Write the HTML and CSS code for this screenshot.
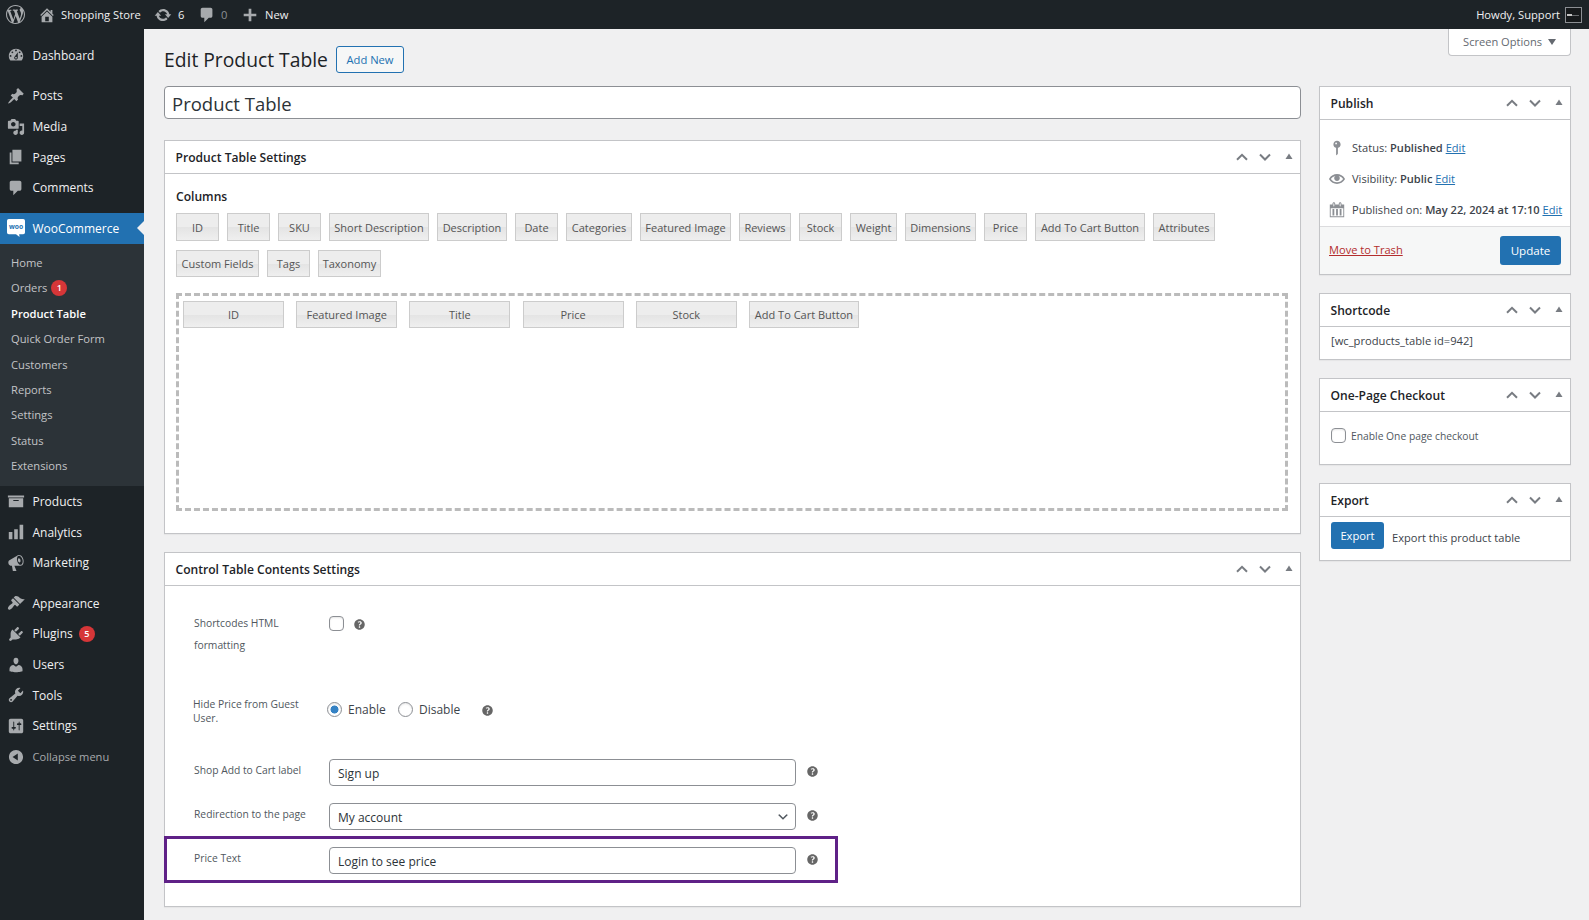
FILE: index.html
```html
<!DOCTYPE html>
<html lang="en">

<head>
	<meta charset="UTF-8">
	<title>Edit Product Table</title>
	<link rel="stylesheet" href="styles.css">
</head>

<body>
	<!-- shared icons -->
	<svg class="sprite" width="0" height="0">
		<symbol id="comment" viewBox="0 0 20 20"><path d="M5 2h9c1.1 0 2 .9 2 2v7c0 1.1-.9 2-2 2h-2l-5 5v-5H5c-1.1 0-2-.9-2-2V4c0-1.1.9-2 2-2z" /></symbol>
		<symbol id="help" viewBox="0 0 20 20"><path d="M17 10c0-3.87-3.14-7-7-7-3.87 0-7 3.13-7 7s3.13 7 7 7c3.86 0 7-3.13 7-7zm-6.3 1.48H9.14v-.43c0-.38.08-.7.24-.98s.46-.57.88-.89c.41-.29.68-.53.81-.71.14-.18.2-.39.2-.62 0-.25-.09-.44-.28-.58-.19-.13-.45-.19-.79-.19-.58 0-1.25.19-2 .57l-.64-1.28c.87-.49 1.8-.74 2.77-.74.81 0 1.45.2 1.92.58.48.39.71.91.71 1.55 0 .43-.09.8-.29 1.11-.19.32-.57.67-1.11 1.06-.38.28-.61.49-.71.63-.1.15-.15.34-.15.57v.35zm-1.47 2.74c-.18-.17-.27-.42-.27-.73 0-.33.08-.58.26-.75s.43-.25.77-.25c.32 0 .57.09.75.26s.27.42.27.74c0 .3-.09.55-.27.72-.18.18-.43.27-.75.27-.33 0-.58-.09-.76-.26z" /></symbol>
		<symbol id="handles" viewBox="0 0 60 14">
			<path class="arrow-up" d="M2 9.800l5-5 5 5" />
			<path class="arrow-down" d="M25 4.500l5 5 5-5" />
			<path class="toggle" d="M54 3.500l3.500 5.500h-7z" />
		</symbol>
	</svg>

	<header class="adminbar">
		<svg class="wp-logo" viewBox="0 0 20 20"><path d="M20 10c0-5.510-4.490-10-10-10C4.480 0 0 4.490 0 10c0 5.520 4.480 10 10 10 5.510 0 10-4.480 10-10zM7.780 15.370L4.370 6.220c.55-.02 1.170-.08 1.170-.08.5-.06.44-1.130-.06-1.110 0 0-1.450.11-2.370.11-.18 0-.37 0-.58-.01C4.120 2.690 6.870 1.110 10 1.110c2.330 0 4.450.87 6.050 2.340-.68-.11-1.650.39-1.650 1.580 0 .74.45 1.360.9 2.100.35.61.55 1.360.55 2.460 0 1.490-1.400 5-1.400 5l-3.030-8.370c.54-.02.82-.17.82-.17.5-.05.44-1.250-.06-1.220 0 0-1.440.12-2.380.12-.87 0-2.330-.12-2.330-.12-.5-.03-.56 1.200-.06 1.220l.92.08 1.260 3.410zM17.410 10c.24-.64.74-1.870.43-4.250.7 1.290 1.050 2.710 1.050 4.250 0 3.290-1.730 6.240-4.400 7.780.97-2.590 1.940-5.200 2.920-7.780zM6.100 18.090C3.120 16.650 1.110 13.530 1.110 10c0-1.300.23-2.480.72-3.590C3.250 10.300 4.670 14.200 6.100 18.090zm4.030-6.630l2.580 6.980c-.86.29-1.760.45-2.710.45-.79 0-1.570-.11-2.290-.33.81-2.380 1.620-4.740 2.420-7.100z" /></svg>
		<div class="bar-item site">
			<svg viewBox="0 0 20 20"><path d="M16 8.500l1.530 1.530-1.060 1.060L10 4.600l-6.470 6.490-1.060-1.060L10 2.500l4 4v-2h2v4zm-6-2.460l6 5.990V18H4v-5.970zM12 17v-5H8v5h4z" /></svg>
			<span>Shopping Store</span>
		</div>
		<div class="bar-item updates">
			<svg viewBox="0 0 20 20"><path d="M10.200 3.280c3.530 0 6.430 2.610 6.920 6h2.080l-3.500 4-3.500-4h2.320c-.45-1.970-2.210-3.450-4.320-3.450-1.450 0-2.730.71-3.540 1.780L4.950 5.660C6.230 4.200 8.110 3.280 10.200 3.280zm-.4 13.440c-3.520 0-6.430-2.610-6.920-6H.8l3.500-4c1.170 1.330 2.330 2.670 3.500 4H5.480c.45 1.970 2.210 3.450 4.320 3.450 1.450 0 2.730-.71 3.540-1.780l1.710 1.950c-1.280 1.460-3.150 2.380-5.250 2.380z" /></svg>
			<span>6</span>
		</div>
		<div class="bar-item count">
			<svg><use href="#comment" /></svg>
			<span>0</span>
		</div>
		<div class="bar-item new">
			<svg viewBox="0 0 20 20"><path d="M17 8.500v3h-5.500V17h-3v-5.500H3v-3h5.500V3h3v5.500z" /></svg>
			<span>New</span>
		</div>
		<div class="howdy">
			<span>Howdy, Support</span>
			<div class="avatar"></div>
		</div>
	</header>

	<div class="wrapper">
		<nav class="sidebar">
			<a class="item">
				<svg viewBox="0 0 20 20"><path d="M3.760 16h12.480c1.100-1.370 1.760-3.110 1.760-5 0-4.420-3.580-8-8-8s-8 3.580-8 8c0 1.890.66 3.630 1.760 5zM10 4c.55 0 1 .45 1 1s-.45 1-1 1-1-.45-1-1 .45-1 1-1zM6 6c.55 0 1 .45 1 1s-.45 1-1 1-1-.45-1-1 .45-1 1-1zm8 0c.55 0 1 .45 1 1s-.45 1-1 1-1-.45-1-1 .45-1 1-1zm-5.370 5.550L12 7v6c0 1.100-.9 2-2 2s-2-.9-2-2c0-.57.24-1.080.63-1.450zM4 10c.55 0 1 .45 1 1s-.45 1-1 1-1-.45-1-1 .45-1 1-1zm12 0c.55 0 1 .45 1 1s-.45 1-1 1-1-.45-1-1 .45-1 1-1zm-5 3c0-.55-.45-1-1-1s-1 .45-1 1 .45 1 1 1 1-.45 1-1z" /></svg>
				Dashboard
			</a>
			<div class="separator"></div>
			<a class="item">
				<svg viewBox="0 0 20 20"><path d="M10.440 3.020l1.820-1.820 6.360 6.350-1.830 1.820c-1.050-.68-2.480-.57-3.410.36l-.75.75c-.92.93-1.040 2.350-.35 3.410l-1.830 1.820-2.410-2.410-2.800 2.790c-.42.42-3.380 2.710-3.800 2.290s1.860-3.390 2.280-3.810l2.790-2.790L4.100 9.360l1.830-1.820c1.050.69 2.480.57 3.400-.36l.75-.75c.93-.92 1.050-2.350.36-3.410z" /></svg>
				Posts
			</a>
			<a class="item">
				<svg viewBox="0 0 20 20"><path d="M13 11V4c0-.55-.45-1-1-1h-1.670L9 1H5L3.670 3H2c-.55 0-1 .45-1 1v7c0 .55.45 1 1 1h10c.55 0 1-.45 1-1zM7 4.500c1.380 0 2.500 1.120 2.500 2.500S8.380 9.500 7 9.500 4.500 8.380 4.500 7 5.620 4.500 7 4.500zM14 6h5v10.500c0 1.380-1.120 2.500-2.500 2.500S14 17.880 14 16.500s1.120-2.500 2.500-2.500c.17 0 .34.02.5.05V9h-3V6zm-4 8.050V13h2v3.500c0 1.380-1.120 2.500-2.500 2.500S7 17.880 7 16.500 8.120 14 9.500 14c.17 0 .34.02.5.05z" /></svg>
				Media
			</a>
			<a class="item">
				<svg viewBox="0 0 20 20"><path d="M6 15V2h10v13H6zm-1 1h8v2H3V5h2v11z" /></svg>
				Pages
			</a>
			<a class="item">
				<svg><use href="#comment" /></svg>
				Comments
			</a>
			<div class="separator"></div>
			<a class="item active">
				<svg class="woo" viewBox="0 0 20 20">
					<path d="M2 0h16a2 2 0 0 1 2 2v13a2 2 0 0 1-2 2h-4.500l.5 3-4-3H2a2 2 0 0 1-2-2V2a2 2 0 0 1 2-2z" />
					<text x="10" y="11.500" text-anchor="middle">woo</text>
				</svg>
				WooCommerce
			</a>
			<div class="submenu">
				<a>Home</a>
				<a>Orders <span class="badge">1</span></a>
				<a class="current">Product Table</a>
				<a>Quick Order Form</a>
				<a>Customers</a>
				<a>Reports</a>
				<a>Settings</a>
				<a>Status</a>
				<a>Extensions</a>
			</div>
			<a class="item">
				<svg viewBox="0 0 20 20"><path d="M19 4v2H1V4h18zM2 7h16v10H2V7zm11 3V9H7v1h6z" /></svg>
				Products
			</a>
			<a class="item">
				<svg viewBox="0 0 20 20"><path d="M18 18V2h-4v16h4zm-6 0V7H8v11h4zm-6 0v-8H2v8h4z" /></svg>
				Analytics
			</a>
			<a class="item">
				<svg viewBox="0 0 20 20"><path d="M18.150 5.940c.46 1.620.38 3.220-.02 4.480-.42 1.280-1.260 2.180-2.300 2.480-.16.06-.26.06-.4.06-.06.02-.12.02-.18.02-.06.02-.14.02-.22.02h-6.800l2.220 5.500c.02.14-.06.26-.14.34-.08.1-.24.16-.34.16H6.950c-.1 0-.26-.06-.34-.16-.08-.08-.16-.2-.14-.34l-1-5.500H4.250l-.02-.02c-.5.06-1.080-.18-1.540-.62s-.88-1.080-1.060-1.880c-.24-.8-.2-1.560-.02-2.200.18-.62.58-1.080 1.060-1.300l.02-.02 9-5.400c.1-.06.18-.1.24-.16.06-.04.14-.08.24-.12.16-.08.28-.12.5-.18 1.040-.3 2.240.1 3.220.98s1.840 2.240 2.260 3.860zm-2.580 5.980h-.02c.4-.1.74-.34 1.040-.7.58-.7.86-1.760.86-3.040 0-.64-.1-1.300-.28-1.980-.34-1.360-1.020-2.500-1.780-3.240s-1.680-1.100-2.460-.88c-.82.22-1.400.96-1.700 2-.32 1.040-.28 2.360.06 3.720.38 1.360 1 2.500 1.800 3.240.78.74 1.620 1.100 2.480.88zm-2.540-7.080c.22-.04.42-.02.62.04.38.16.76.48 1.020 1s.42 1.200.42 1.780c0 .3-.04.56-.12.8-.18.48-.44.84-.86.94-.34.1-.8-.06-1.140-.4s-.64-.86-.78-1.500c-.18-.62-.12-1.240.02-1.720s.48-.84.82-.94z" /></svg>
				Marketing
			</a>
			<div class="separator"></div>
			<a class="item">
				<svg viewBox="0 0 20 20"><path d="M14.480 11.060L7.410 3.990l1.500-1.500c.5-.56 2.300-.47 3.510.32 1.210.8 1.430 1.280 2.910 2.100 1.180.64 2.450 1.260 4.450.85zm-.71.71L6.700 4.700 4.930 6.470c-.39.39-.39 1.020 0 1.410l1.060 1.060c.39.39.39 1.030 0 1.420-.6.6-1.430 1.110-2.210 1.690-.35.26-.7.53-1.010.84C1.430 14.230.4 16.080 1.400 17.070c.99 1 2.840-.03 4.180-1.360.31-.31.58-.66.85-1.020.57-.78 1.080-1.610 1.690-2.210.39-.39 1.020-.39 1.410 0l1.060 1.060c.39.39 1.020.39 1.410 0z" /></svg>
				Appearance
			</a>
			<a class="item">
				<svg viewBox="0 0 20 20"><path d="M13.110 4.360L9.870 7.600 8 5.730l3.240-3.240c.35-.34 1.050-.2 1.560.32.52.51.66 1.210.31 1.550zm-8 1.770l.91-1.120 9.010 9.010-1.190.84c-.71.71-2.630 1.160-3.820 1.160H6.140L4.900 17.260c-.59.59-1.540.59-2.120 0-.59-.58-.59-1.530 0-2.120l1.240-1.240v-3.880c0-1.130.4-3.190 1.090-3.890zm7.260 3.970l3.240-3.240c.34-.35 1.040-.21 1.550.31.52.51.66 1.210.31 1.550l-3.240 3.250z" /></svg>
				Plugins <span class="badge">5</span>
			</a>
			<a class="item">
				<svg viewBox="0 0 20 20"><path d="M10 9.250c-2.270 0-2.730-3.440-2.730-3.440C7 4.020 7.820 2 9.970 2c2.160 0 2.980 2.020 2.710 3.810 0 0-.41 3.440-2.680 3.440zm0 2.570L12.720 10c2.390 0 4.520 2.330 4.520 4.530v2.490s-3.650 1.130-7.240 1.130c-3.650 0-7.240-1.130-7.240-1.130v-2.490c0-2.250 1.940-4.480 4.470-4.480z" /></svg>
				Users
			</a>
			<a class="item">
				<svg viewBox="0 0 20 20"><path d="M16.680 9.770c-1.340 1.340-3.300 1.670-4.950.99l-5.410 6.520c-.99.99-2.590.99-3.580 0s-.99-2.590 0-3.570l6.520-5.420c-.68-1.650-.35-3.610.99-4.950 1.280-1.280 3.120-1.620 4.720-1.060l-2.890 2.890 2.820 2.820 2.860-2.870c.53 1.580.18 3.390-1.080 4.650zM3.810 16.210c.4.39 1.040.39 1.430 0 .4-.4.4-1.040 0-1.430-.39-.4-1.030-.4-1.430 0-.39.39-.39 1.030 0 1.430z" /></svg>
				Tools
			</a>
			<a class="item">
				<svg viewBox="0 0 20 20"><path d="M18 16V4c0-1.100-.9-2-2-2H4c-1.100 0-2 .9-2 2v12c0 1.100.9 2 2 2h12c1.100 0 2-.9 2-2zM8 11h1c.55 0 1 .45 1 1s-.45 1-1 1H8v1.500c0 .28-.22.5-.5.5s-.5-.22-.5-.5V13H6c-.55 0-1-.45-1-1s.45-1 1-1h1V5.500c0-.28.22-.5.5-.5s.5.22.5.5V11zm5-2h-1c-.55 0-1-.45-1-1s.45-1 1-1h1V5.500c0-.28.22-.5.5-.5s.5.22.5.5V7h1c.55 0 1 .45 1 1s-.45 1-1 1h-1v5.500c0 .28-.22.5-.5.5s-.5-.22-.5-.5V9z" /></svg>
				Settings
			</a>
			<a class="item collapse">
				<svg viewBox="0 0 20 20"><path d="M10 2.160c4.330 0 7.840 3.510 7.840 7.840s-3.510 7.840-7.840 7.840S2.160 14.330 2.160 10 5.710 2.160 10 2.160zm2 11.720V6.120L6.180 9.970z" /></svg>
				Collapse menu
			</a>
		</nav>

		<main class="content">
			<div class="top">
				<h1>Edit Product Table</h1>
				<a class="add-new">Add New</a>
				<button class="screen-options">Screen Options <span class="caret"></span></button>
			</div>

			<div class="columns">
				<div class="primary">
					<input class="title-input" type="text" value="Product Table">

					<section class="box settings-box">
						<div class="box-header">
							<h2>Product Table Settings</h2>
							<svg class="handles"><use href="#handles" /></svg>
						</div>
						<div class="box-body">
							<h3>Columns</h3>
							<div class="chips chips-first">
								<span>ID</span>
								<span>Title</span>
								<span>SKU</span>
								<span>Short Description</span>
								<span>Description</span>
								<span>Date</span>
								<span>Categories</span>
								<span>Featured Image</span>
								<span>Reviews</span>
								<span>Stock</span>
								<span>Weight</span>
								<span>Dimensions</span>
								<span>Price</span>
								<span>Add To Cart Button</span>
								<span>Attributes</span>
							</div>
							<div class="chips chips-second">
								<span>Custom Fields</span>
								<span>Tags</span>
								<span>Taxonomy</span>
							</div>
							<div class="dropzone">
								<div class="chips chips-used">
									<span>ID</span>
									<span>Featured Image</span>
									<span>Title</span>
									<span>Price</span>
									<span>Stock</span>
									<span>Add To Cart Button</span>
								</div>
							</div>
						</div>
					</section>

					<section class="box control-box">
						<div class="box-header">
							<h2>Control Table Contents Settings</h2>
							<svg class="handles"><use href="#handles" /></svg>
						</div>
						<div class="form-row shortcodes">
							<label>Shortcodes HTML formatting</label>
							<input type="checkbox">
							<svg class="help"><use href="#help" /></svg>
						</div>
						<div class="form-row hide-price">
							<label>Hide Price from Guest User.</label>
							<input type="radio" name="hide" checked>
							<span class="enable">Enable</span>
							<input type="radio" name="hide">
							<span class="disable">Disable</span>
							<svg class="help"><use href="#help" /></svg>
						</div>
						<div class="form-row">
							<label>Shop Add to Cart label</label>
							<input type="text" value="Sign up">
							<svg class="help"><use href="#help" /></svg>
						</div>
						<div class="form-row">
							<label>Redirection to the page</label>
							<div class="select">
								My account
								<svg viewBox="0 0 20 20"><path d="M5 6l5 5 5-5 2 1-7 7-7-7 2-1z" /></svg>
							</div>
							<svg class="help"><use href="#help" /></svg>
						</div>
						<div class="form-row highlight">
							<label>Price Text</label>
							<input type="text" value="Login to see price">
							<svg class="help"><use href="#help" /></svg>
						</div>
					</section>
				</div>

				<aside class="side">
					<section class="box">
						<div class="box-header">
							<h2>Publish</h2>
							<svg class="handles first"><use href="#handles" /></svg>
						</div>
						<div class="publish">
							<div class="publish-row">
								<svg viewBox="0 0 20 20"><path d="M14 6c0 1.860-1.280 3.410-3 3.860V16c0 1-2 2-2 2V9.860c-1.720-.45-3-2-3-3.860 0-2.210 1.790-4 4-4s4 1.790 4 4zM8 5c0 .55.45 1 1 1s1-.45 1-1-.45-1-1-1-1 .45-1 1z" /></svg>
								<p>Status: <b>Published</b> <a>Edit</a></p>
							</div>
							<div class="publish-row">
								<svg class="eye" viewBox="0 0 20 20"><path d="M19.700 9.400C17.700 6 14 3.900 10 3.900S2.300 6 .3 9.400L0 10l.3.6c2 3.400 5.700 5.500 9.700 5.500s7.700-2.100 9.700-5.500l.3-.6-.3-.6zM10 14.100c-3.100 0-6-1.600-7.700-4.100C3.600 8 5.700 6.600 8 6.100c-.9.6-1.500 1.700-1.500 2.900 0 1.900 1.600 3.500 3.500 3.500s3.500-1.600 3.500-3.500c0-1.200-.6-2.300-1.500-2.900 2.300.5 4.400 1.900 5.700 3.900-1.700 2.500-4.600 4.100-7.700 4.100z" /></svg>
								<p>Visibility: <b>Public</b> <a>Edit</a></p>
							</div>
							<div class="publish-row">
								<svg viewBox="0 0 20 20"><path d="M15 4h3v14H2V4h3V3c0-.83.67-1.500 1.500-1.500S8 2.170 8 3v1h4V3c0-.83.67-1.500 1.500-1.500S15 2.170 15 3v1zM6 3v2.500c0 .28.22.5.5.5s.5-.22.5-.5V3c0-.28-.22-.5-.5-.5S6 2.720 6 3zm7 0v2.500c0 .28.22.5.5.5s.5-.22.5-.5V3c0-.28-.22-.5-.5-.5s-.5.22-.5.5zm4 14V8H3v9h14zM7 16V9H5v7h2zm4 0V9H9v7h2zm4 0V9h-2v7h2z" /></svg>
								<p>Published on: <b>May 22, 2024 at 17:10</b> <a>Edit</a></p>
							</div>
						</div>
						<div class="actions">
							<a class="trash">Move to Trash</a>
							<button class="button update">Update</button>
						</div>
					</section>

					<section class="box">
						<div class="box-header">
							<h2>Shortcode</h2>
							<svg class="handles"><use href="#handles" /></svg>
						</div>
						<p class="shortcode">[wc_products_table id=942]</p>
					</section>

					<section class="box">
						<div class="box-header">
							<h2>One-Page Checkout</h2>
							<svg class="handles"><use href="#handles" /></svg>
						</div>
						<div class="checkout">
							<input type="checkbox">
							<label>Enable One page checkout</label>
						</div>
					</section>

					<section class="box">
						<div class="box-header">
							<h2>Export</h2>
							<svg class="handles"><use href="#handles" /></svg>
						</div>
						<div class="export">
							<button class="button">Export</button>
							<span>Export this product table</span>
						</div>
					</section>
				</aside>
			</div>
		</main>
	</div>
</body>

</html>
```
FILE: styles.css
```css
* {
	box-sizing: border-box;
}

body {
	margin: 0;
	height: 920px;
	overflow: hidden;
	display: flex;
	flex-direction: column;
	background-color: #f0f0f1;
	color: #3c434a;
	font-family: "Open Sans", "Noto Sans", sans-serif;
	font-size: 11.2px;
	line-height: 16px;
}

h1,
h2,
h3,
p {
	margin: 0;
}

input,
button {
	font-family: inherit;
	margin: 0;
}

svg {
	flex-shrink: 0;
}

.sprite {
	position: absolute;
}

/* admin bar */
.adminbar {
	display: flex;
	align-items: center;
	height: 29px;
	flex-shrink: 0;
	padding: 0 7px 0 6px;
	background-color: #1d2327;
	color: #f0f0f1;
}

.adminbar svg {
	fill: #a7aaad;
}

.wp-logo {
	width: 19px;
	height: 19px;
	margin-right: 13px;
}

.bar-item {
	display: flex;
	align-items: center;
}

.bar-item svg {
	width: 18px;
	height: 18px;
}

.site {
	gap: 5px;
	width: 116px;
}

.updates {
	gap: 6px;
	width: 44px;
}

.count {
	gap: 5px;
	width: 43px;
	color: #8c8f94;
}

.new {
	gap: 6px;
}

.howdy {
	display: flex;
	align-items: center;
	gap: 5px;
	margin-left: auto;
}

.avatar {
	width: 17px;
	height: 16px;
	border: 1px solid #8c8f94;
	background: linear-gradient(#c5c5c5, #c5c5c5) 1px 6px / 5px 2px no-repeat, linear-gradient(#66696c, #66696c) 6px 7px / 7px 1px no-repeat, #16191b;
}

.wrapper {
	display: flex;
	flex: 1;
}

/* left menu */
.sidebar {
	width: 144px;
	padding-top: 11px;
	background-color: #1d2327;
	color: #f0f0f1;
}

.item {
	display: flex;
	align-items: center;
	height: 30.7px;
	padding: 1px 0 0 7px;
	font-size: 12px;
}

.item svg {
	width: 18px;
	height: 18px;
	margin: -1px 7.5px 0 0;
	fill: #a7aaad;
}

.separator {
	height: 9.8px;
}

.active {
	height: 31px;
	padding-top: 0;
	position: relative;
	background-color: #2271b1;
	color: #fff;
}

.active::after {
	content: "";
	position: absolute;
	right: 0;
	top: 8px;
	border: 7px solid transparent;
	border-left: none;
	border-right-color: #f0f0f1;
}

.item .woo {
	fill: #fff;
}

.woo text {
	fill: #2271b1;
	font-size: 7.5px;
	font-weight: 700;
}

.submenu {
	display: flex;
	flex-direction: column;
	height: 242px;
	padding: 6px 0 7px 11px;
	background-color: #2c3338;
	color: #c3c4c7;
}

.submenu a {
	display: flex;
	align-items: center;
	flex: 1;
}

.submenu .current {
	color: #fff;
	font-weight: 600;
}

.badge {
	width: 16px;
	height: 16px;
	margin-left: 6px;
	border-radius: 8px;
	background-color: #d63638;
	color: #fff;
	font-size: 9px;
	font-weight: 600;
	text-align: center;
}

.submenu .badge {
	margin-left: 4px;
}

.collapse {
	color: #a7aaad;
	font-size: 11.1px;
}

/* page */
.content {
	flex: 1;
	padding: 0 18px 0 20px;
}

.top {
	display: flex;
	height: 57px;
}

h1 {
	padding-top: 17px;
	color: #1d2327;
	font-size: 19.3px;
	font-weight: 400;
	line-height: 27px;
	width: 172px;
	white-space: nowrap;
}

.add-new {
	width: 68px;
	height: 27px;
	margin-top: 17px;
	border: 1px solid #2271b1;
	border-radius: 3px;
	background-color: #f6f7f7;
	color: #2271b1;
	line-height: 25px;
	text-align: center;
}

.screen-options {
	width: 123px;
	height: 27px;
	padding: 0 6px 2px;
	margin-left: auto;
	border: 1px solid #c3c4c7;
	border-top: none;
	border-radius: 0 0 4px 4px;
	background-color: #fff;
	color: #646970;
	font-size: 11.1px;
}

.caret {
	display: inline-block;
	margin: 0 0 1px 3px;
	border: 4px solid transparent;
	border-top: 6px solid #646970;
	border-bottom: none;
}

.columns {
	display: flex;
	gap: 18px;
}

.primary {
	width: 1137px;
}

.title-input {
	display: block;
	width: 100%;
	height: 33px;
	margin-bottom: 21px;
	padding: 2px 7px 0;
	border: 1px solid #8c8f94;
	border-radius: 4px;
	color: #2c3338;
	font-size: 18.5px;
}

.box {
	margin-bottom: 18px;
	border: 1px solid #c3c4c7;
	background-color: #fff;
	box-shadow: 0 1px 1px rgba(0, 0, 0, 0.04);
}

.box-header {
	display: flex;
	align-items: center;
	justify-content: space-between;
	height: 33px;
	padding: 0 5px 0 10.5px;
	border-bottom: 1px solid #c3c4c7;
}

h2,
h3 {
	color: #1d2327;
	font-size: 12.1px;
	font-weight: 550;
}

h2 {
	padding-top: 2px;
}

.handles {
	width: 60px;
	height: 14px;
}

.arrow-up,
.arrow-down {
	fill: none;
	stroke: #787c82;
	stroke-width: 2;
}

.toggle {
	fill: #787c82;
}

.settings-box {
	height: 394px;
}

.box-body {
	padding: 15px 11px 0;
}

h3 {
	margin-bottom: 8px;
}

.chips {
	display: grid;
	column-gap: 8px;
}

.chips span {
	height: 27px;
	border: 1px solid #ccc;
	background: linear-gradient(#ededed 50%, #e4e4e4 52%, #efefef);
	color: #555;
	font-size: 11px;
	line-height: 26px;
	text-align: center;
	white-space: nowrap;
}

.chips-first {
	grid-template-columns: 43px 43px 43px 100px 70px 43px 66px 91px 52px 43px 47px 71px 43px 110px 62px;
	margin-bottom: 9px;
}

.chips.chips-first span {
	height: 28px;
	line-height: 28px;
}

.chips-second {
	grid-template-columns: 83px 43px 63px;
	margin-bottom: 16px;
}

.dropzone {
	width: 1112px;
	height: 218px;
	padding: 5px 4px;
	border: 3px dashed #bbb;
}

.chips-used {
	grid-template-columns: repeat(5, 101px) 110px;
	column-gap: 12.2px;
}

/* table contents form */
.control-box {
	height: 355px;
}

.form-row {
	display: flex;
	width: 673px;
	height: 44px;
	padding: 6px 0 0 29px;
}

.form-row label {
	width: 135px;
	padding-top: 3px;
	color: #50575e;
	font-size: 10.3px;
}

.form-row input[type="text"],
.select {
	width: 467px;
	height: 27px;
	padding: 2px 8px 0;
	border: 1px solid #8c8f94;
	border-radius: 4px;
	background-color: #fff;
	color: #2c3338;
	font-size: 12px;
}

.select {
	display: flex;
	align-items: center;
	justify-content: space-between;
}

.select svg {
	width: 14px;
	height: 14px;
	margin: -2px -3px 0 0;
	fill: #50575e;
}

.help {
	width: 15px;
	height: 15px;
	margin: 5px 0 0 9px;
	fill: #666;
}

input[type="checkbox"],
input[type="radio"] {
	appearance: none;
	flex-shrink: 0;
	width: 15px;
	height: 15px;
	border: 1px solid #8c8f94;
	border-radius: 4px;
	background-color: #fff;
	box-shadow: inset 0 1px 2px rgba(0, 0, 0, 0.1);
}

input[type="radio"] {
	border-radius: 50%;
}

input[type="radio"]:checked {
	background: radial-gradient(circle, #3582c4 3.7px, #fff 4.3px);
}

.shortcodes {
	height: 98px;
	padding-top: 30px;
}

.form-row.shortcodes label {
	padding: 0 20px 0 0;
	margin-top: -4px;
	line-height: 22px;
}

.shortcodes .help {
	margin-top: 1px;
	margin-left: 8px;
}

.hide-price {
	height: 69px;
	padding: 18px 0 0 28px;
	font-size: 12px;
}

.form-row.hide-price label {
	width: 134px;
	padding: 0 26px 0 0;
	margin-top: -5px;
	line-height: 14px;
}

.enable {
	width: 50px;
	margin-left: 6px;
}

.disable {
	width: 61px;
	margin-left: 6px;
}

.hide-price .help {
	margin: 1px 0 0 0;
}

.form-row.highlight {
	width: 674px;
	height: 47px;
	margin: -5px 0 0 -1px;
	padding: 8px 0 0 27px;
	border: 3px solid #5f2187;
}

/* right column */
.side {
	width: 252px;
}

.first .arrow-up {
	opacity: 0.7;
}

.publish {
	height: 106px;
	padding: 12px 8px 0;
}

.publish-row {
	display: flex;
	align-items: center;
	height: 31px;
	gap: 6px;
	font-size: 11.1px;
	white-space: nowrap;
}

.publish-row svg {
	width: 18px;
	height: 18px;
	fill: #8c8f94;
}

.publish-row .eye {
	width: 16px;
	margin: 0 1px;
}

.publish-row b {
	font-weight: 600;
}

.publish-row a {
	color: #2271b1;
	text-decoration: underline;
}

.actions {
	display: flex;
	justify-content: space-between;
	height: 48px;
	padding: 9px 9px 0;
	border-top: 1px solid #dcdcde;
	background-color: #f6f7f7;
}

.trash {
	margin-top: 6px;
	color: #b32d2e;
	font-size: 11.1px;
	text-decoration: underline;
}

.button {
	width: 53px;
	height: 27px;
	padding: 0;
	border: none;
	border-radius: 3px;
	background-color: #2271b1;
	color: #fff;
	font-size: 11.2px;
}

.update {
	width: 61px;
	height: 29px;
	font-size: 11.6px;
	font-weight: 500;
}

.shortcode {
	height: 32px;
	padding: 6px 11px;
}

.checkout {
	display: flex;
	height: 52px;
	padding: 16px 11px 0;
	gap: 5px;
}

.checkout label {
	color: #50575e;
	font-size: 10.3px;
}

.export {
	display: flex;
	height: 43px;
	padding: 5px 11px 0;
	gap: 8px;
}

.export span {
	padding-top: 8px;
	font-size: 11.1px;
}
```
